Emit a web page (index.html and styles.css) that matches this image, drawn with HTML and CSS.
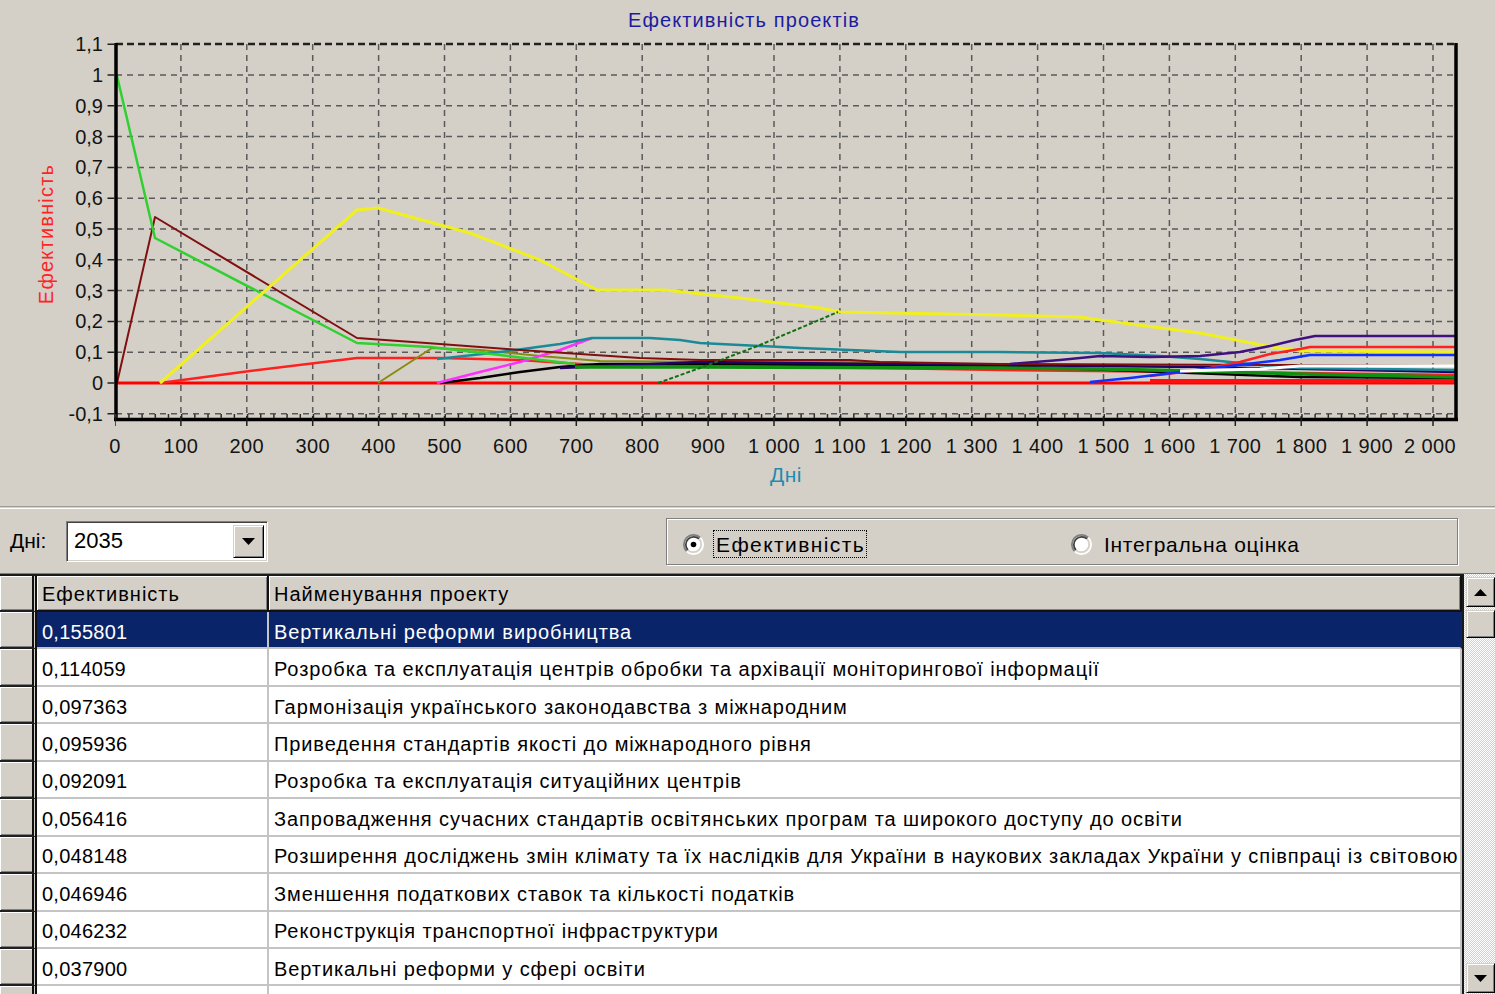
FILE: index.html
```html
<!DOCTYPE html>
<html lang="uk">
<head>
<meta charset="utf-8">
<title>Ефективність проектів</title>
<link rel="stylesheet" href="styles.css">
</head>
<body>
<div class="chart">
<svg width="1495" height="506" viewBox="0 0 1495 506" xmlns="http://www.w3.org/2000/svg">
  <text class="ttl" x="744" y="27">Ефективність проектів</text>
  <text class="yname" transform="translate(53 234) rotate(-90)">Ефективність</text>
  <text class="xname" x="786" y="482">Дні</text>

  <!-- grid -->
  <g class="gridv">
    <line x1="180.9" y1="44" x2="180.9" y2="418"/>
    <line x1="246.8" y1="44" x2="246.8" y2="418"/>
    <line x1="312.7" y1="44" x2="312.7" y2="418"/>
    <line x1="378.6" y1="44" x2="378.6" y2="418"/>
    <line x1="444.5" y1="44" x2="444.5" y2="418"/>
    <line x1="510.4" y1="44" x2="510.4" y2="418"/>
    <line x1="576.3" y1="44" x2="576.3" y2="418"/>
    <line x1="642.2" y1="44" x2="642.2" y2="418"/>
    <line x1="708.1" y1="44" x2="708.1" y2="418"/>
    <line x1="774" y1="44" x2="774" y2="418"/>
    <line x1="839.9" y1="44" x2="839.9" y2="418"/>
    <line x1="905.8" y1="44" x2="905.8" y2="418"/>
    <line x1="971.7" y1="44" x2="971.7" y2="418"/>
    <line x1="1037.6" y1="44" x2="1037.6" y2="418"/>
    <line x1="1103.5" y1="44" x2="1103.5" y2="418"/>
    <line x1="1169.4" y1="44" x2="1169.4" y2="418"/>
    <line x1="1235.3" y1="44" x2="1235.3" y2="418"/>
    <line x1="1301.2" y1="44" x2="1301.2" y2="418"/>
    <line x1="1367.1" y1="44" x2="1367.1" y2="418"/>
    <line x1="1433" y1="44" x2="1433" y2="418"/>
  </g>
  <g class="gridh">
    <line x1="116" y1="75" x2="1456" y2="75"/>
    <line x1="116" y1="105.8" x2="1456" y2="105.8"/>
    <line x1="116" y1="136.6" x2="1456" y2="136.6"/>
    <line x1="116" y1="167.4" x2="1456" y2="167.4"/>
    <line x1="116" y1="198.2" x2="1456" y2="198.2"/>
    <line x1="116" y1="229" x2="1456" y2="229"/>
    <line x1="116" y1="259.8" x2="1456" y2="259.8"/>
    <line x1="116" y1="290.6" x2="1456" y2="290.6"/>
    <line x1="116" y1="321.4" x2="1456" y2="321.4"/>
    <line x1="116" y1="352.2" x2="1456" y2="352.2"/>
    <line x1="116" y1="383" x2="1456" y2="383"/>
    <line x1="116" y1="413.8" x2="1456" y2="413.8"/>
  </g>
  <line class="topb" x1="116" y1="44" x2="1456" y2="44"/>

  <!-- data series -->
  <g class="series">
    <path d="M116 383 H1456" stroke="#ff0000" stroke-width="3"/>
    <polyline points="160,383 250,371 357,358 440,358 520,360 580,364 620,366 880,368 1000,370 1300,373 1456,375" stroke="#ff2020" stroke-width="2.5"/>
    <polyline points="378,383 432,348 480,350 540,356 600,361 720,362 900,362" stroke="#8a8a10" stroke-width="2"/>
    <polyline points="440,383 480,378 520,372 560,367 600,364 700,364 1000,366 1300,377 1456,378" stroke="#000000" stroke-width="2.5"/>
    <polyline points="560,368 700,362 880,364 1000,365 1200,367 1456,372" stroke="#200060" stroke-width="2.5"/>
    <polyline points="437,383 480,372 520,362 560,350 592,338" stroke="#ff30ff" stroke-width="2.5"/>
    <polyline points="437,359 500,352 560,344 592,338 650,338 680,340 700,343 760,346 800,348 900,352 1000,352 1100,353 1160,356 1200,359 1260,365 1300,368 1456,370" stroke="#1a8a98" stroke-width="2.5"/>
    <polyline points="575,367 700,367 1000,368 1100,369 1200,371 1300,374 1456,377" stroke="#109010" stroke-width="3.5"/>
    <polyline points="117,383 155,217 357,338 440,344 520,350 580,354 640,358 700,360 850,360 880,362 1000,364 1300,365 1456,366" stroke="#801010" stroke-width="2"/>
    <polyline points="117,76 155,238 357,343 430,347 500,355 575,364" stroke="#30d030" stroke-width="2.5"/>
    <polyline points="160,383 357,210 378,208 470,233 540,260 597,290 665,290 740,298 820,308 840,312 1000,315 1080,317 1100,320 1200,333 1272,347 1300,351 1456,352" stroke="#f0f020" stroke-width="3"/>
    <polyline points="658,383 700,368 760,345 838,312" stroke="#107010" stroke-width="2" stroke-dasharray="4 2"/>
    <polyline points="1010,364 1060,360 1100,356 1150,357 1200,356 1240,352 1270,346 1295,340 1315,336 1456,336" stroke="#401080" stroke-width="2.5"/>
    <polyline points="1150,376 1200,370 1240,362 1270,354 1300,349 1310,347 1456,347" stroke="#ff2020" stroke-width="2.5"/>
    <polyline points="1090,382 1130,378 1180,372 1230,366 1280,360 1310,355 1456,355" stroke="#1030ff" stroke-width="2.5"/>
    <polyline points="1180,371 1260,369 1300,366 1456,366" stroke="#ffffff" stroke-width="3"/>
    <polyline points="1150,381 1456,381" stroke="#ff1010" stroke-width="4"/>
  </g>

  <!-- axes -->
  <line class="axis" x1="116" y1="43" x2="116" y2="421"/>
  <line class="axis" x1="114" y1="419.5" x2="1458" y2="419.5"/>
  <line class="axis" x1="1456" y1="43" x2="1456" y2="421"/>
  <line class="tickmin" x1="115" y1="416" x2="1456" y2="416"/>
  <line class="tickmaj" x1="115" y1="421" x2="1456" y2="421"/>
  <line class="ticky" x1="111" y1="43.45" x2="111" y2="415"/>

  <g class="ylab">
    <text x="103" y="51">1,1</text>
    <text x="103" y="82">1</text>
    <text x="103" y="113">0,9</text>
    <text x="103" y="144">0,8</text>
    <text x="103" y="174">0,7</text>
    <text x="103" y="205">0,6</text>
    <text x="103" y="236">0,5</text>
    <text x="103" y="267">0,4</text>
    <text x="103" y="298">0,3</text>
    <text x="103" y="328">0,2</text>
    <text x="103" y="359">0,1</text>
    <text x="103" y="390">0</text>
    <text x="103" y="421">-0,1</text>
  </g>
  <g class="xlab">
    <text x="115" y="453">0</text>
    <text x="180.9" y="453">100</text>
    <text x="246.8" y="453">200</text>
    <text x="312.7" y="453">300</text>
    <text x="378.6" y="453">400</text>
    <text x="444.5" y="453">500</text>
    <text x="510.4" y="453">600</text>
    <text x="576.3" y="453">700</text>
    <text x="642.2" y="453">800</text>
    <text x="708.1" y="453">900</text>
    <text x="774" y="453">1 000</text>
    <text x="839.9" y="453">1 100</text>
    <text x="905.8" y="453">1 200</text>
    <text x="971.7" y="453">1 300</text>
    <text x="1037.6" y="453">1 400</text>
    <text x="1103.5" y="453">1 500</text>
    <text x="1169.4" y="453">1 600</text>
    <text x="1235.3" y="453">1 700</text>
    <text x="1301.2" y="453">1 800</text>
    <text x="1367.1" y="453">1 900</text>
    <text x="1430" y="453">2 000</text>
  </g>
</svg>
</div>

<div class="sep"></div>

<div class="toolbar">
  <span class="days-label">Дні:</span>
  <div class="combo">
    <span class="combo-text">2035</span>
    <span class="combo-btn">
      <svg width="13" height="7" viewBox="0 0 13 7"><path d="M0 0 H13 L6.5 7 Z" fill="#000"/></svg>
    </span>
  </div>
  <div class="group">
    <div class="radio first">
      <svg class="rb" width="21" height="21" viewBox="0 0 12 12">
        <circle cx="6" cy="6" r="5" fill="#fff"/>
        <path d="M2.11 9.89 A5.5 5.5 0 0 1 9.89 2.11" fill="none" stroke="#808080" stroke-width="1"/>
        <path d="M9.89 2.11 A5.5 5.5 0 0 1 2.11 9.89" fill="none" stroke="#ffffff" stroke-width="1"/>
        <path d="M2.82 9.18 A4.5 4.5 0 0 1 9.18 2.82" fill="none" stroke="#404040" stroke-width="1"/>
        <path d="M9.18 2.82 A4.5 4.5 0 0 1 2.82 9.18" fill="none" stroke="#d4d0c8" stroke-width="1"/>
        <circle cx="6" cy="6" r="1.6" fill="#000"/>
      </svg>
      <span class="rlabel focus">Ефективність</span>
    </div>
    <div class="radio">
      <svg class="rb" width="21" height="21" viewBox="0 0 12 12">
        <circle cx="6" cy="6" r="5" fill="#fff"/>
        <path d="M2.11 9.89 A5.5 5.5 0 0 1 9.89 2.11" fill="none" stroke="#808080" stroke-width="1"/>
        <path d="M9.89 2.11 A5.5 5.5 0 0 1 2.11 9.89" fill="none" stroke="#ffffff" stroke-width="1"/>
        <path d="M2.82 9.18 A4.5 4.5 0 0 1 9.18 2.82" fill="none" stroke="#404040" stroke-width="1"/>
        <path d="M9.18 2.82 A4.5 4.5 0 0 1 2.82 9.18" fill="none" stroke="#d4d0c8" stroke-width="1"/>
      </svg>
      <span class="rlabel">Інтегральна оцінка</span>
    </div>
  </div>
</div>

<div class="gridwrap">
  <div class="grid">
    <div class="row header">
      <div class="ind"></div>
      <div class="hcell c1">Ефективність</div>
      <div class="hcell c2">Найменування проекту</div>
    </div>
    <div class="row sel">
      <div class="ind"></div>
      <div class="cell c1">0,155801</div>
      <div class="cell c2">Вертикальні реформи виробництва</div>
    </div>
    <div class="row">
      <div class="ind"></div>
      <div class="cell c1">0,114059</div>
      <div class="cell c2">Розробка та експлуатація центрів обробки та архівації моніторингової інформації</div>
    </div>
    <div class="row">
      <div class="ind"></div>
      <div class="cell c1">0,097363</div>
      <div class="cell c2">Гармонізація українського законодавства з міжнародним</div>
    </div>
    <div class="row">
      <div class="ind"></div>
      <div class="cell c1">0,095936</div>
      <div class="cell c2">Приведення стандартів якості до міжнародного рівня</div>
    </div>
    <div class="row">
      <div class="ind"></div>
      <div class="cell c1">0,092091</div>
      <div class="cell c2">Розробка та експлуатація ситуаційних центрів</div>
    </div>
    <div class="row">
      <div class="ind"></div>
      <div class="cell c1">0,056416</div>
      <div class="cell c2">Запровадження сучасних стандартів освітянських програм та широкого доступу до освіти</div>
    </div>
    <div class="row">
      <div class="ind"></div>
      <div class="cell c1">0,048148</div>
      <div class="cell c2">Розширення досліджень змін клімату та їх наслідків для України в наукових закладах України у співпраці із світовою</div>
    </div>
    <div class="row">
      <div class="ind"></div>
      <div class="cell c1">0,046946</div>
      <div class="cell c2">Зменшення податкових ставок та кількості податків</div>
    </div>
    <div class="row">
      <div class="ind"></div>
      <div class="cell c1">0,046232</div>
      <div class="cell c2">Реконструкція транспортної інфраструктури</div>
    </div>
    <div class="row">
      <div class="ind"></div>
      <div class="cell c1">0,037900</div>
      <div class="cell c2">Вертикальні реформи у сфері освіти</div>
    </div>
    <div class="row">
      <div class="ind"></div>
      <div class="cell c1"></div>
      <div class="cell c2"></div>
    </div>
  </div>
  <div class="scrollbar">
    <div class="sbtn up"><svg width="13" height="7" viewBox="0 0 13 7"><path d="M0 7 H13 L6.5 0 Z" fill="#000"/></svg></div>
    <div class="thumb"></div>
    <div class="track"></div>
    <div class="sbtn down"><svg width="13" height="7" viewBox="0 0 13 7"><path d="M0 0 H13 L6.5 7 Z" fill="#000"/></svg></div>
  </div>
</div>
</body>
</html>
```

FILE: styles.css
```css
* { box-sizing: border-box; }
html, body { margin: 0; padding: 0; }
body {
  width: 1495px;
  height: 994px;
  overflow: hidden;
  background: #d4d0c8;
  font-family: "Liberation Sans", Arial, sans-serif;
  font-size: 20px;
  color: #000;
}

/* ---------- chart ---------- */
.chart { height: 506px; }
.chart svg { display: block; }
.ttl { font-family: "Liberation Sans", Arial, sans-serif; font-size: 20px; letter-spacing: 1.1px; fill: #1c1ca0; text-anchor: middle; }
.yname { font-family: "Liberation Sans", Arial, sans-serif; font-size: 20px; letter-spacing: 1.2px; fill: #ff2424; text-anchor: middle; }
.xname { font-family: "Liberation Sans", Arial, sans-serif; font-size: 21px; letter-spacing: 0.5px; fill: #1f8cb0; text-anchor: middle; }
.ylab text { font-family: "Liberation Sans", Arial, sans-serif; font-size: 20px; fill: #141414; text-anchor: end; }
.xlab text { font-family: "Liberation Sans", Arial, sans-serif; font-size: 20px; letter-spacing: 0.4px; fill: #141414; text-anchor: middle; }
.gridv line, .gridh line { stroke: #5a5a5a; stroke-width: 1.5; stroke-dasharray: 6 5; }
.topb { stroke: #202020; stroke-width: 2.5; stroke-dasharray: 7 4; }
.series polyline, .series path { fill: none; stroke-linejoin: round; }
.axis { stroke: #000; stroke-width: 3.5; }
.tickmin { stroke: #303030; stroke-width: 4; stroke-dasharray: 1.5 11.68; }
.tickmaj { stroke: #202020; stroke-width: 10; stroke-dasharray: 1.5 64.4; stroke-dashoffset: 0.75; }
.ticky { stroke: #202020; stroke-width: 7; stroke-dasharray: 1.5 29.3; }

/* ---------- toolbar ---------- */
.sep { height: 3px; border-top: 1px solid #a09c94; border-bottom: 1px solid #ffffff; }
.toolbar { height: 64px; display: flex; align-items: center; padding-left: 10px; }
.days-label { width: 56px; font-size: 21px; }
.combo {
  width: 202px; height: 41px; background: #fff;
  border: 1px solid; border-color: #808080 #ffffff #ffffff #808080;
  box-shadow: inset 1px 1px 0 #404040, inset -1px -1px 0 #d4d0c8;
  display: flex; align-items: center; padding: 3px 3px 3px 7px;
}
.combo-text { flex: 1; font-size: 22px; }
.combo-btn {
  width: 31px; height: 33px; background: #d4d0c8;
  border: 1px solid; border-color: #d4d0c8 #000 #000 #d4d0c8;
  box-shadow: inset 1px 1px 0 #fff, inset -1px -1px 0 #808080;
  display: flex; align-items: center; justify-content: center;
}
.group {
  margin-left: 398px; width: 792px; height: 47px;
  border: 1px solid #808080;
  box-shadow: 1px 1px 0 #fff, inset 1px 1px 0 #fff;
  display: flex; align-items: center; padding: 6px 0 0 16px;
}
.radio { display: flex; align-items: center; }
.radio.first { width: 388px; }
.rb { display: block; flex: none; }
.rlabel { font-size: 21px; letter-spacing: 0.7px; margin-left: 9px; padding: 2px 1px 0 2px; border: 1px solid transparent; }
.rlabel.focus { border: 1px dotted #000; letter-spacing: 1.4px; }

/* ---------- grid ---------- */
.gridwrap { display: flex; height: 421px; border-top: 1px solid #808080; }
.grid { width: 1464px; overflow: hidden; border-top: 2px solid #1a1a1a; border-right: 2px solid #1a1a1a; background: #fff; }
.row { display: flex; height: 37.44px; }
.row.header { height: 36px; }
.ind {
  width: 37px; flex: none; background: #d4d0c8;
  border-right: 5px double #111;
  border-bottom: 2px solid #202020;
  box-shadow: inset 1px 1px 0 #fff, inset 0 -1px 0 #808080;
}
.hcell {
  background: #d4d0c8; display: flex; align-items: center; padding: 2px 0 0 5px;
  border-bottom: 2px solid #111; border-right: 2px solid #111;
  box-shadow: inset 1px 1px 0 #fff, inset -1px -1px 0 #808080;
  white-space: nowrap; overflow: hidden;
  letter-spacing: 1px;
}
.cell {
  display: flex; align-items: center; padding: 5px 0 0 5px;
  border-bottom: 2px solid #c4c4c4; border-right: 2px solid #c4c4c4;
  white-space: nowrap; overflow: hidden;
}
.c1 { width: 232px; flex: none; }
.cell.c1 { letter-spacing: 0.25px; }
.c2 { flex: 1; min-width: 0; }
.cell.c2 { letter-spacing: 0.9px; }
.row.sel .cell { background: #0a246a; color: #fff; }
.row.sel .c2 { border-right-color: #0a246a; }

/* ---------- scrollbar ---------- */
.scrollbar {
  width: 31px; display: flex; flex-direction: column; align-items: flex-end;
  padding-top: 3px; padding-bottom: 1px;
  background-color: #ecebe7;
  background-image: repeating-conic-gradient(#d4d0c8 0 25%, #ffffff 0 50%);
  background-size: 2px 2px;
}
.sbtn, .thumb {
  width: 29px; background: #d4d0c8;
  border: 1px solid; border-color: #d4d0c8 #000 #000 #d4d0c8;
  box-shadow: inset 1px 1px 0 #fff, inset -1px -1px 0 #808080;
}
.sbtn { height: 30px; display: flex; align-items: center; justify-content: center; flex: none; }
.thumb { height: 28px; margin-top: 3px; flex: none; }
.track { flex: 1; }
```
